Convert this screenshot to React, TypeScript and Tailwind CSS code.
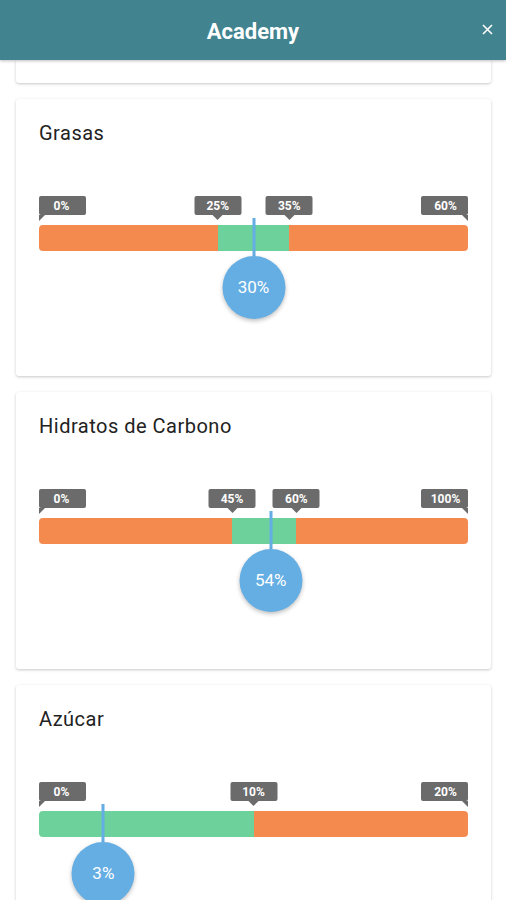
import React from 'react';

type Segment = { to: number; color: 'ok' | 'bad' };

interface Nutrient {
  title: string;
  max: number;
  value: number;
  ticks: number[];
  segments: Segment[];
}

const nutrients: Nutrient[] = [
  {
    title: 'Grasas',
    max: 60,
    value: 30,
    ticks: [0, 25, 35, 60],
    segments: [
      { to: 25, color: 'bad' },
      { to: 35, color: 'ok' },
      { to: 60, color: 'bad' },
    ],
  },
  {
    title: 'Hidratos de Carbono',
    max: 100,
    value: 54,
    ticks: [0, 45, 60, 100],
    segments: [
      { to: 45, color: 'bad' },
      { to: 60, color: 'ok' },
      { to: 100, color: 'bad' },
    ],
  },
  {
    title: 'Azúcar',
    max: 20,
    value: 3,
    ticks: [0, 10, 20],
    segments: [
      { to: 10, color: 'ok' },
      { to: 20, color: 'bad' },
    ],
  },
];

const Tick: React.FC<{ label: number; pct: number; max: number }> = ({ label, pct, max }) => {
  const first = label === 0;
  const last = label === max;

  if (first) {
    return (
      <div className="absolute top-0 left-0">
        <div className="w-[47px] h-[19px] rounded-[2px] bg-[#6b6b6b] text-white text-[12px] font-bold flex items-center justify-center pr-[2px]">
          {label}%
        </div>
        <div className="w-0 h-0 border-l-[6px] border-l-[#6b6b6b] border-b-[6px] border-b-transparent" />
      </div>
    );
  }
  if (last) {
    return (
      <div className="absolute top-0 right-0 flex flex-col items-end">
        <div className="w-[47px] h-[19px] rounded-[2px] bg-[#6b6b6b] text-white text-[12px] font-bold flex items-center justify-center pl-[2px]">
          {label}%
        </div>
        <div className="w-0 h-0 border-r-[6px] border-r-[#6b6b6b] border-b-[6px] border-b-transparent" />
      </div>
    );
  }
  return (
    <div
      className="absolute top-0 -translate-x-1/2 flex flex-col items-center"
      style={{ left: `${pct}%` }}
    >
      <div className="w-[47px] h-[19px] rounded-[2px] bg-[#6b6b6b] text-white text-[12px] font-bold flex items-center justify-center">
        {label}%
      </div>
      <div className="w-0 h-0 border-x-[5px] border-x-transparent border-t-[5px] border-t-[#6b6b6b]" />
    </div>
  );
};

const RangeBar: React.FC<{ n: Nutrient }> = ({ n }) => {
  let prev = 0;
  const pos = (n.value / n.max) * 100;
  return (
    <div className="relative h-[122px] pt-[29px]">
      {n.ticks.map(t => (
        <Tick key={t} label={t} pct={(t / n.max) * 100} max={n.max} />
      ))}
      <div className="flex h-[26px] rounded-[4px] overflow-hidden">
        {n.segments.map((s, i) => {
          const w = ((s.to - prev) / n.max) * 100;
          prev = s.to;
          return (
            <div
              key={i}
              className={s.color === 'ok' ? 'bg-[#6dd19b]' : 'bg-[#f58a4e]'}
              style={{ width: `${w}%` }}
            />
          );
        })}
      </div>
      <div
        className="absolute top-[22px] -translate-x-1/2 flex flex-col items-center"
        style={{ left: `${pos}%` }}
      >
        <div className="w-[3px] h-[38px] bg-[#64aee3]" />
        <div className="w-[63px] h-[63px] rounded-full bg-[#64aee3] shadow-[0_2px_4px_rgba(0,0,0,0.25)] flex items-center justify-center text-white text-[17px]">
          {n.value}%
        </div>
      </div>
    </div>
  );
};

const Card: React.FC<{ n: Nutrient }> = ({ n }) => (
  <div className="bg-white rounded-[3px] shadow-[0_1px_3px_rgba(0,0,0,0.22)] px-[23px] pt-[22px] pb-[58px]">
    <h2 className="text-[20px] leading-[24px] tracking-[0.5px] text-[#222]">{n.title}</h2>
    <div className="mt-[51px]">
      <RangeBar n={n} />
    </div>
  </div>
);

export default function App() {
  return (
    <div className="w-[506px] h-[900px] overflow-hidden bg-white font-['Roboto',sans-serif]">
      <header className="relative z-10 h-[60px] bg-[#41838e] shadow-[0_1px_3px_rgba(0,0,0,0.25)] flex items-center justify-center pt-[3px]">
        <h1 className="text-white text-[22px] font-bold">Academy</h1>
        <button className="absolute right-[11px] top-[20px] w-[16px] h-[18px] flex items-center justify-center text-white">
          <svg width="11" height="11" viewBox="0 0 11 11" fill="none" stroke="white" strokeWidth="1.6">
            <path d="M1 1 L10 10 M10 1 L1 10" />
          </svg>
        </button>
      </header>
      <div className="flex flex-col gap-[16px] ml-[16px] mr-[15px]">
        <div className="h-[23px] bg-white rounded-b-[3px] shadow-[0_1px_3px_rgba(0,0,0,0.22)]" />
        {nutrients.map(n => (
          <Card key={n.title} n={n} />
        ))}
      </div>
    </div>
  );
}
